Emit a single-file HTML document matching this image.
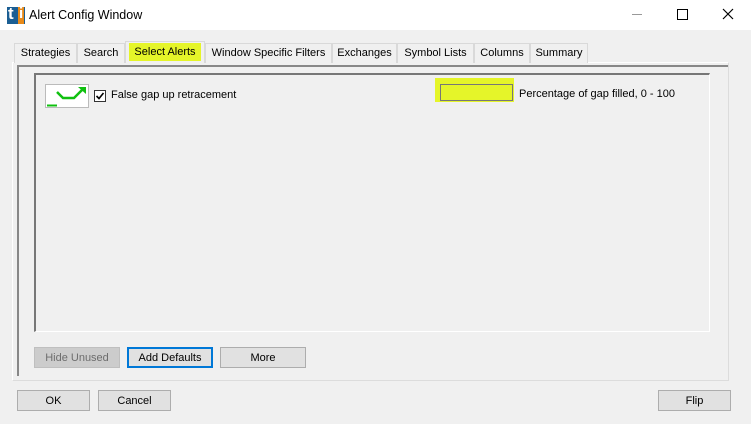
<!DOCTYPE html>
<html><head><meta charset="utf-8"><style>
*{margin:0;padding:0;box-sizing:border-box}
body{width:751px;height:424px;background:#f0f0f0;font-family:"Liberation Sans",sans-serif;font-size:11px;color:#000;position:relative;overflow:hidden}
.a{position:absolute}
.title{left:0;top:0;width:751px;height:30px;background:#fff}
.tab{position:absolute;top:43px;height:20px;border:1px solid #d9d9d9;border-bottom:none;background:#f0f0f0;text-align:center;line-height:19px;font-size:11px}
.btn{position:absolute;height:21px;border:1px solid #adadad;background:#e1e1e1;text-align:center;line-height:20px;font-size:11px}
</style></head><body>
<div class="a title"></div>
<div class="a" style="left:7px;top:7px;width:18px;height:17px;background:#1b5e93"></div>
<div class="a" style="left:8px;top:4px;color:#fff;font-weight:bold;font-size:17px;line-height:20px">t</div>
<div class="a" style="left:18px;top:7px;width:6px;height:17px;background:#e88a1a"></div>
<div class="a" style="left:19px;top:4px;color:#fff;font-weight:bold;font-size:15px;line-height:20px">i</div>
<div class="a" style="left:29px;top:8px;font-size:12.5px">Alert Config Window</div>
<div class="a" style="left:632px;top:14px;width:10px;height:1px;background:#999"></div>
<div class="a" style="left:677px;top:9px;width:11px;height:11px;border:1px solid #000"></div>
<svg class="a" style="left:722px;top:8px" width="12" height="12"><path d="M1 1L11 11M11 1L1 11" stroke="#000" stroke-width="1.2"/></svg>

<div class="a" style="left:12px;top:62px;width:717px;height:319px;border:1px solid #fff;border-right-color:#dcdcdc;border-bottom-color:#dcdcdc"></div>
<div class="a" style="left:17px;top:65px;width:711px;height:311px;border-left:2px solid #888;border-top:2px solid #888"></div>
<div class="a" style="left:34px;top:73px;width:676px;height:259px;border-left:2px solid #777;border-top:2px solid #777;border-right:1px solid #fff;border-bottom:1px solid #fff"></div>

<div class="tab" style="left:14px;width:63px">Strategies</div>
<div class="tab" style="left:77px;width:48px">Search</div>
<div class="tab" style="left:125px;width:80px;top:41px;height:22px;background:#f0f0f0;z-index:2"><span style="display:inline-block;background:#e5f529;width:72px;height:18px;margin-top:1px;line-height:18px">Select Alerts</span></div>
<div class="tab" style="left:205px;width:127px">Window Specific Filters</div>
<div class="tab" style="left:332px;width:65px">Exchanges</div>
<div class="tab" style="left:397px;width:77px">Symbol Lists</div>
<div class="tab" style="left:474px;width:56px">Columns</div>
<div class="tab" style="left:530px;width:58px">Summary</div>

<div class="a" style="left:45px;top:84px;width:44px;height:24px;background:#fff;border:1px solid #bbb"></div>
<svg class="a" style="left:45px;top:84px" width="44" height="24"><path d="M12 8L18 14L29 14L38 5" stroke="#10c010" stroke-width="2.5" fill="none"/><path d="M33 3L41 3L41 10Z" fill="#10c010"/><path d="M2 21.5L12 21.5" stroke="#10c010" stroke-width="2"/></svg>
<div class="a" style="left:94px;top:90px;width:12px;height:12px;border:1px solid #333;background:#fff"></div>
<svg class="a" style="left:94px;top:90px" width="12" height="12"><path d="M2.5 6L5 8.5L9.5 3" stroke="#000" stroke-width="1.6" fill="none"/></svg>
<div class="a" style="left:111px;top:89px">False gap up retracement</div>

<div class="a" style="left:435px;top:78px;width:79px;height:24px;background:#e5f529"></div>
<div class="a" style="left:440px;top:84px;width:73px;height:17px;border:1px solid #777"></div>
<div class="a" style="left:519px;top:88px">Percentage of gap filled, 0 - 100</div>

<div class="btn" style="left:34px;top:347px;width:86px;background:#cccccc;border-color:#bfbfbf;color:#6d6d6d">Hide Unused</div>
<div class="btn" style="left:127px;top:347px;width:86px;border:2px solid #0078d7;line-height:18px">Add Defaults</div>
<div class="btn" style="left:220px;top:347px;width:86px">More</div>
<div class="btn" style="left:17px;top:390px;width:73px">OK</div>
<div class="btn" style="left:98px;top:390px;width:73px">Cancel</div>
<div class="btn" style="left:658px;top:390px;width:73px">Flip</div>
</body></html>
